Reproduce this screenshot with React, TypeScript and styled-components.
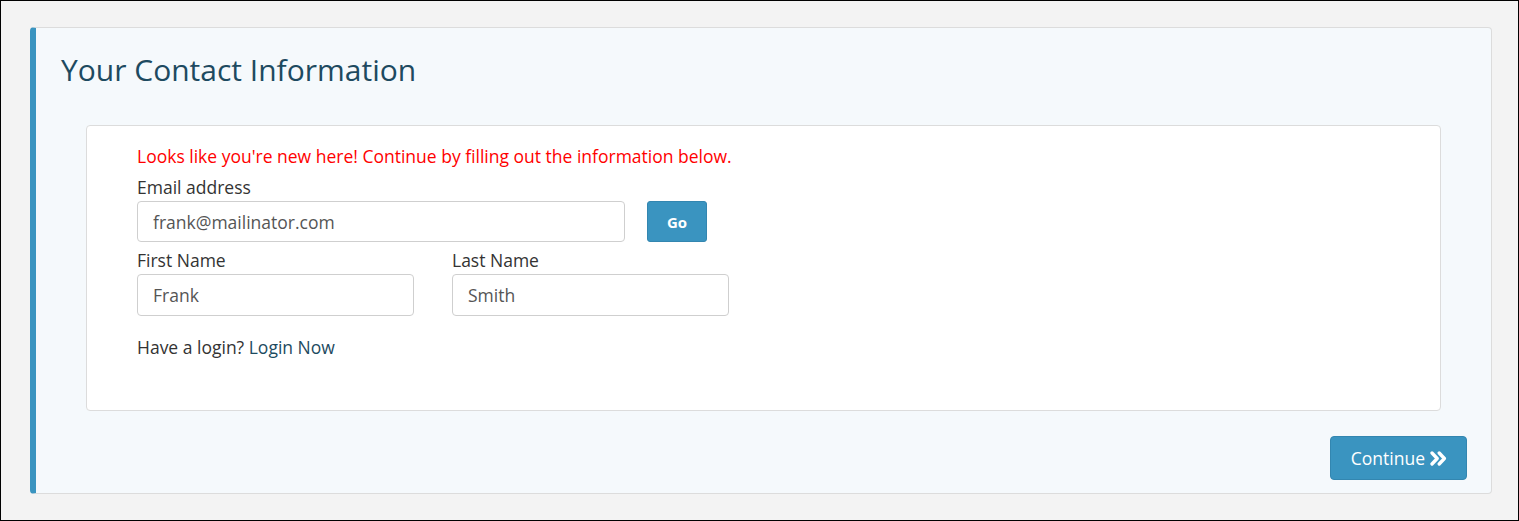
import React, { useState } from 'react';
import styled, { createGlobalStyle } from 'styled-components';

const GlobalStyle = createGlobalStyle`
  html, body {
    margin: 0;
    padding: 0;
    background: #f3f3f3;
  }

  * {
    box-sizing: border-box;
  }
`;

const Frame = styled.div`
  width: 1519px;
  height: 521px;
  border: 1px solid #000;
  background: #f3f3f3;
  padding: 26px 26px 26px 29px;
  font-family: 'Open Sans', 'Noto Sans', sans-serif;
`;

const Panel = styled.div`
  height: 100%;
  background: #f5f9fc;
  border: 1px solid #dcdcdc;
  border-left: 6px solid #3a94c0;
  border-radius: 4px;
  display: flex;
  flex-direction: column;
`;

const Title = styled.h2`
  margin: 0;
  padding: 22px 0 0 25px;
  font-size: 30px;
  font-weight: 400;
  line-height: 40px;
  color: #1d4a60;
`;

const Card = styled.div`
  margin: 35px 50px 0 50px;
  background: #fff;
  border: 1px solid #dcdcdc;
  border-radius: 4px;
  padding: 19px 50px 49px 50px;
  height: 286px;
`;

const Notice = styled.p`
  margin: 0;
  font-size: 17.5px;
  line-height: 22px;
  color: #ff0000;
`;

const Label = styled.label<{ $gap?: number }>`
  display: block;
  font-size: 17.5px;
  line-height: 22px;
  color: #333;
  margin-top: ${(p) => p.$gap ?? 0}px;
  margin-bottom: 3px;
`;

const Row = styled.div<{ $gap: number }>`
  display: flex;
  align-items: flex-start;
  gap: ${(p) => p.$gap}px;
`;

const Field = styled.div``;

const TextInput = styled.input<{ $width: number }>`
  display: block;
  width: ${(p) => p.$width}px;
  height: ${(p) => (p.$width > 300 ? 41 : 42)}px;
  padding: 0 15px;
  border: 1px solid #cfcfcf;
  border-radius: 4px;
  background: #fff;
  font-family: inherit;
  font-size: 17.5px;
  color: #555;
  outline: none;
`;

const GoButton = styled.button`
  width: 60px;
  height: 41px;
  border: 1px solid #3386b0;
  border-radius: 3px;
  background: #3a94c0;
  color: #fff;
  font-family: inherit;
  font-size: 15px;
  font-weight: 700;
  cursor: pointer;
`;

const LoginLine = styled.p`
  margin: 20px 0 0 0;
  font-size: 17.5px;
  line-height: 22px;
  color: #333;

  a {
    color: #1d4a60;
    text-decoration: none;
  }
`;

const Footer = styled.div`
  display: flex;
  justify-content: flex-end;
  padding: 25px 24px 0 0;
`;

const ContinueButton = styled.button`
  display: flex;
  align-items: center;
  gap: 5px;
  height: 44px;
  padding: 0 19px 0 20px;
  border: 1px solid #3386b0;
  border-radius: 4px;
  background: #3a94c0;
  color: #fff;
  font-family: inherit;
  font-size: 17.5px;
  cursor: pointer;
`;

const Chevrons = () => (
  <svg width="17" height="15" viewBox="0 0 17 15" fill="none" stroke="#fff" strokeWidth="3.3" strokeLinecap="round" strokeLinejoin="round">
    <polyline points="2,2 7.2,7.5 2,13" />
    <polyline points="9.2,2 14.4,7.5 9.2,13" />
  </svg>
);

const App = () => {
  const [email, setEmail] = useState('frank@mailinator.com');
  const [first, setFirst] = useState('Frank');
  const [last, setLast] = useState('Smith');

  return (
    <>
      <GlobalStyle />
      <Frame>
        <Panel>
          <Title>Your Contact Information</Title>
          <Card>
            <Notice>Looks like you're new here! Continue by filling out the information below.</Notice>
            <Label $gap={9}>Email address</Label>
            <Row $gap={22}>
              <TextInput $width={488} value={email} onChange={(e) => setEmail(e.target.value)} />
              <GoButton>Go</GoButton>
            </Row>
            <Row $gap={38}>
              <Field>
                <Label $gap={7}>First Name</Label>
                <TextInput $width={277} value={first} onChange={(e) => setFirst(e.target.value)} />
              </Field>
              <Field>
                <Label $gap={7}>Last Name</Label>
                <TextInput $width={277} value={last} onChange={(e) => setLast(e.target.value)} />
              </Field>
            </Row>
            <LoginLine>
              Have a login? <a href="#">Login Now</a>
            </LoginLine>
          </Card>
          <Footer>
            <ContinueButton>
              Continue <Chevrons />
            </ContinueButton>
          </Footer>
        </Panel>
      </Frame>
    </>
  );
};

export default App;
